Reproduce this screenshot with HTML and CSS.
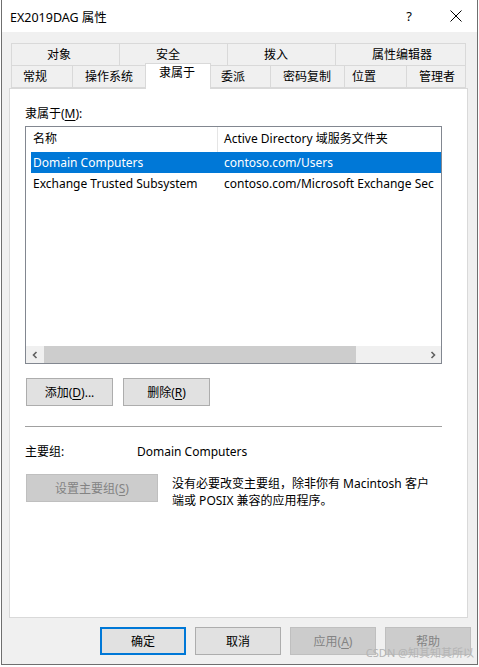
FILE: index.html
```html
<!DOCTYPE html>
<html lang="zh">
<head>
<meta charset="utf-8">
<title>EX2019DAG 属性</title>
<link rel="stylesheet" href="styles.css">
</head>
<body>
<div class="window">
  <div class="titlebar">
    <span class="title">EX2019DAG 属性</span>
    <span class="help">?</span>
    <svg class="close" width="12" height="12" viewBox="0 0 12 12"><path d="M0.5 0.5 L11.5 11.5 M11.5 0.5 L0.5 11.5" stroke="#000" stroke-width="1" fill="none"/></svg>
  </div>
  <div class="body">
    <div class="tabrow row1">
      <div class="tab w109 p36">对象</div>
      <div class="tab w109 p37">安全</div>
      <div class="tab w109 p37">拨入</div>
      <div class="tab w131 p37">属性编辑器</div>
    </div>
    <div class="tabrow row2">
      <div class="tab w62 p12">常规</div>
      <div class="tab w74 p13">操作系统</div>
      <div class="tab sel w66 p14">隶属于</div>
      <div class="tab w61 p11">委派</div>
      <div class="tab w75 p13">密码复制</div>
      <div class="tab w63 p8">位置</div>
      <div class="tab w60 p13">管理者</div>
    </div>
    <div class="panel">
      <div class="label">隶属于(<u>M</u>):</div>
      <div class="listview">
        <div class="lv-header">
          <div class="hcell c1">名称</div>
          <div class="hcell c2">Active Directory 域服务文件夹</div>
        </div>
        <div class="lv-row selected">
          <div class="cell c1">Domain Computers</div>
          <div class="cell c2">contoso.com/Users</div>
        </div>
        <div class="lv-row">
          <div class="cell c1">Exchange Trusted Subsystem</div>
          <div class="cell c2">contoso.com/Microsoft Exchange Sec</div>
        </div>
        <div class="lv-space"></div>
        <div class="hscroll">
          <div class="sarrow"><svg width="8" height="8" viewBox="0 0 8 8"><path d="M5.5 1 L2.5 4 L5.5 7" stroke="#606060" stroke-width="1.6" fill="none"/></svg></div>
          <div class="strack"><div class="sthumb"></div></div>
          <div class="sarrow"><svg width="8" height="8" viewBox="0 0 8 8"><path d="M2.5 1 L5.5 4 L2.5 7" stroke="#606060" stroke-width="1.6" fill="none"/></svg></div>
        </div>
      </div>
      <div class="btnrow">
        <button class="btn w87">添加(<u>D</u>)...</button>
        <button class="btn w87">删除(<u>R</u>)</button>
      </div>
      <div class="sep"></div>
      <div class="primary">
        <span class="plabel">主要组:</span>
        <span>Domain Computers</span>
      </div>
      <div class="setrow">
        <button class="btn disabled w132">设置主要组(<u>S</u>)</button>
        <p class="note">没有必要改变主要组，除非你有 Macintosh 客户<br>端或 POSIX 兼容的应用程序。</p>
      </div>
    </div>
    <div class="footer">
      <button class="btn fbtn default">确定</button>
      <button class="btn fbtn">取消</button>
      <button class="btn fbtn disabled">应用(<u>A</u>)</button>
      <button class="btn fbtn disabled">帮助</button>
    </div>
  </div>
  <div class="watermark">CSDN @知其知其所以</div>
</div>
</body>
</html>
```
FILE: styles.css
```css
* { box-sizing: border-box; }
html, body { margin: 0; padding: 0; background: #ffffff; }
body {
  font-family: "Noto Sans", "Noto Sans CJK SC", sans-serif;
  font-size: 12px;
  color: #000;
}
u { text-decoration: underline; text-underline-offset: 2px; }

.window {
  position: relative;
  margin-left: 1px;
  width: 477px;
  height: 665px;
  border: 1px solid #6f6f6f;
  border-top: none;
  display: flex;
  flex-direction: column;
}
.titlebar {
  height: 32px;
  background: #fff;
  display: flex;
  align-items: center;
  padding-left: 8px;
}
.title { font-size: 12.5px; flex: 1; }
.help { font-size: 13px; margin-right: 38px; }
.close { margin-right: 15px; }

.body {
  flex: 1;
  background: #f0f0f0;
  padding: 11px 9px 0 7px;
}
.tabrow { display: flex; margin-left: 2px; align-items: flex-start; }
.row2 { margin-top: -1px; }
.tab {
  height: 23px;
  line-height: 21px;
  border: 1px solid #d9d9d9;
  background: #f0f0f0;
  white-space: nowrap;
  margin-left: -1px;
}
.tab:first-child { margin-left: 0; }
.tab.sel {
  position: relative;
  z-index: 2;
  background: #fff;
  height: 26px;
  margin-top: -2px;
  border-bottom: none;
  line-height: 18px;
}
.w109 { width: 109px; } .w131 { width: 131px; }
.w62 { width: 62px; } .w74 { width: 74px; } .w66 { width: 66px; }
.w61 { width: 61px; } .w75 { width: 75px; } .w63 { width: 63px; } .w60 { width: 60px; }
.p36 { padding-left: 35px; } .p37 { padding-left: 36px; }
.p12 { padding-left: 11px; } .p13 { padding-left: 12px; } .p14 { padding-left: 13px; }
.p11 { padding-left: 10px; } .p8 { padding-left: 7px; }

.panel {
  position: relative;
  z-index: 1;
  margin-top: -1px;
  height: 530px;
  background: #fff;
  border: 1px solid #d9d9d9;
  padding: 17px 0 0 15px;
}
.label { line-height: 16px; }
.listview {
  margin-top: 4px;
  width: 417px;
  height: 238px;
  border: 1px solid #828790;
  display: flex;
  flex-direction: column;
  overflow: hidden;
}
.lv-header { display: flex; height: 25px; flex: none; }
.hcell { line-height: 24px; white-space: nowrap; }
.hcell.c1 { width: 192px; padding-left: 7px; border-right: 1px solid #e5e5e5; }
.hcell.c2 { padding-left: 6px; }
.lv-row { display: flex; height: 21px; line-height: 21px; margin-left: 5px; white-space: nowrap; flex: none; }
.lv-row.selected { background: #0078d7; color: #fff; }
.cell.c1 { width: 191px; padding-left: 2px; flex: none; }
.cell.c2 { padding-left: 2px; overflow: hidden; flex: 1; }
.lv-space { flex: 1; }
.hscroll { height: 17px; display: flex; background: #f0f0f0; flex: none; }
.sarrow { width: 17px; display: flex; align-items: center; justify-content: center; }
.strack { flex: 1; display: flex; align-items: stretch; }
.sthumb { width: 312px; margin-left: 1px; background: #cdcdcd; }

.btn {
  font-family: inherit;
  font-size: 12px;
  color: #000;
  background: #e1e1e1;
  border: 1px solid #adadad;
  height: 28px;
  padding: 0;
  margin: 0;
}
.btn.disabled { background: #cccccc; border-color: #bfbfbf; color: #838383; }
.btn.default { border: 2px solid #0078d7; }
.w87 { width: 87px; }
.w132 { width: 132px; }

.btnrow { display: flex; gap: 10px; margin-top: 14px; margin-left: 1px; }
.sep { width: 417px; height: 1px; background: #a0a0a0; margin-top: 20px; }
.primary { margin-top: 17px; line-height: 16px; display: flex; }
.plabel { width: 112px; }
.setrow { display: flex; align-items: flex-start; margin-top: 14px; margin-left: 1px; }
.note { margin: 1px 0 0 14px; line-height: 17px; }

.footer {
  display: flex;
  justify-content: flex-end;
  gap: 9px;
  margin-top: 9px;
  margin-right: -3px;
}
.fbtn { width: 86px; }

.watermark {
  position: absolute;
  right: 3px;
  bottom: 4px;
  font-size: 11px;
  color: #b4b4b4;
  white-space: nowrap;
}
```
